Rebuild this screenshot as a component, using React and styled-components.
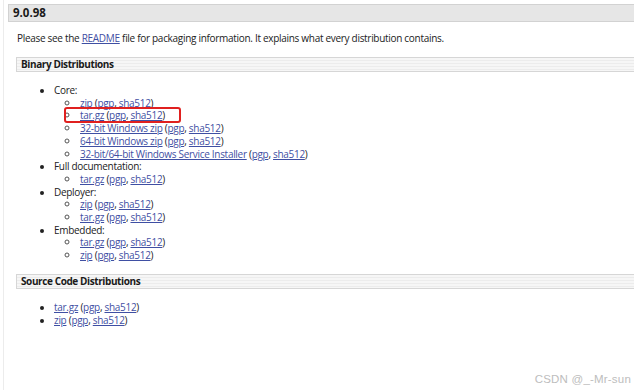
import React from "react";
import styled, { createGlobalStyle } from "styled-components";

const GlobalStyle = createGlobalStyle`
  html, body {
    margin: 0;
    padding: 0;
    background: #ffffff;
  }
  body {
    font-family: "Open Sans", "Liberation Sans", sans-serif;
    font-size: 10px;
    letter-spacing: -0.3px;
    color: #222;
    overflow: hidden;
  }
`;

const Page = styled.div`
  position: relative;
  width: 634px;
  height: 390px;
  overflow: hidden;
  border-left: 1px solid #ececec;
  margin-left: 3px;
  box-sizing: border-box;
`;

const VersionBar = styled.h3`
  margin: 4px 0 0 4px;
  height: 16px;
  line-height: 16px;
  padding: 0 4px;
  background: #e6e6e6;
  border: 1px solid #d2d2d2;
  border-right: none;
  font-size: 11.5px;
  letter-spacing: 0;
  font-weight: 700;
  color: #1a1a1a;
`;

const Body = styled.div`
  padding-left: 13px;
`;

const Intro = styled.p`
  margin: 10px 0 0 0;
  line-height: 13px;
  color: #222;
`;

const Link = styled.a`
  color: #3f4fa3;
  text-decoration: underline;
  text-underline-offset: 1px;
`;

const SubBar = styled.h4`
  margin: 12px 0 0 -1px;
  height: 13px;
  line-height: 13px;
  padding: 0 4px;
  border: 1px solid #d6d6d6;
  border-right: none;
  background: repeating-linear-gradient(
    to bottom,
    #f6f6f6 0px,
    #f6f6f6 2px,
    #ececec 2px,
    #ececec 3px
  );
  font-size: 10px;
  letter-spacing: -0.4px;
  font-weight: 700;
  color: #1a1a1a;
`;

const List = styled.ul`
  margin: ${(p) => (p.$top ? p.$top : 0)}px 0 0 0;
  padding-left: ${(p) => (p.$indent ? p.$indent : 36)}px;
  list-style: ${(p) => (p.$circle ? "circle" : "disc")};
  line-height: 12.7px;

  & > li::marker {
    font-size: ${(p) => (p.$circle ? 12 : 10)}px;
    color: ${(p) => (p.$circle ? "#555" : "#222")};
  }
`;

const Item = styled.li`
  font-size: 10px;
`;

const Highlight = styled.span`
  position: relative;
  &::after {
    content: "";
    position: absolute;
    left: -16px;
    right: -16px;
    top: -1px;
    bottom: -1px;
    border: 2px solid #e0201f;
    border-radius: 3px;
  }
`;

const Watermark = styled.div`
  position: absolute;
  right: 6px;
  bottom: 5px;
  font-family: "Liberation Sans", Arial, sans-serif;
  font-size: 11.5px;
  color: #bdbdbd;
  letter-spacing: 0.2px;
`;

const Files = ({ name }) => (
  <>
    <Link href="#">{name}</Link> (<Link href="#">pgp</Link>, <Link href="#">sha512</Link>)
  </>
);

const groups = [
  {
    label: "Core:",
    files: ["zip", "tar.gz", "32-bit Windows zip", "64-bit Windows zip", "32-bit/64-bit Windows Service Installer"],
  },
  { label: "Full documentation:", files: ["tar.gz"] },
  { label: "Deployer:", files: ["zip", "tar.gz"] },
  { label: "Embedded:", files: ["tar.gz", "zip"] },
];

export default function App() {
  return (
    <>
      <GlobalStyle />
      <Page>
        <VersionBar>9.0.98</VersionBar>
        <Body>
          <Intro>
            Please see the <Link href="#">README</Link> file for packaging information. It explains what every
            distribution contains.
          </Intro>
          <SubBar>Binary Distributions</SubBar>
          <List $top={12} $indent={37}>
            {groups.map((g) => (
              <Item key={g.label}>
                {g.label}
                <List $circle $indent={26}>
                  {g.files.map((f, i) =>
                    g.label === "Core:" && i === 1 ? (
                      <Item key={f}>
                        <Highlight>
                          <Files name={f} />
                        </Highlight>
                      </Item>
                    ) : (
                      <Item key={f + i}>
                        <Files name={f} />
                      </Item>
                    )
                  )}
                </List>
              </Item>
            ))}
          </List>
          <SubBar>Source Code Distributions</SubBar>
          <List $top={12} $indent={37}>
            <Item>
              <Files name="tar.gz" />
            </Item>
            <Item>
              <Files name="zip" />
            </Item>
          </List>
        </Body>
        <Watermark>CSDN @_-Mr-sun</Watermark>
      </Page>
    </>
  );
}
